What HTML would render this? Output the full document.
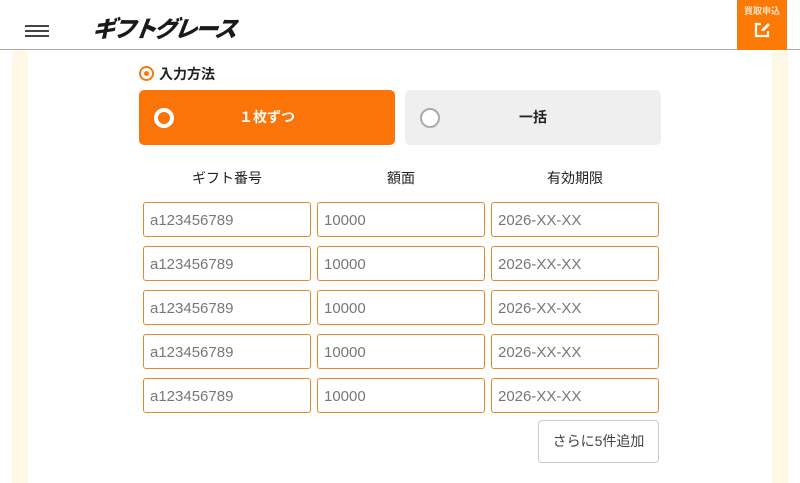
<!DOCTYPE html>
<html><head><meta charset="utf-8"><style>
*{box-sizing:border-box;margin:0;padding:0}
body{width:800px;height:483px;overflow:hidden;background:#fff;font-family:"Liberation Sans","Noto Sans CJK JP",sans-serif;position:relative}
.hdr{position:absolute;left:0;top:0;width:800px;height:50px;border-bottom:1px solid #a8a8a8;background:#fff}
.ham{position:absolute;left:25px;width:24px;height:2px;background:#444}
.logo{position:absolute;left:93px;top:10px;font-size:23px;font-weight:900;font-style:italic;color:#1a1a1a;letter-spacing:-2.5px;transform:skewX(-8deg)}
.buy{position:absolute;left:737px;top:0;width:50px;height:50px;background:#fb7a05;color:#fff;text-align:center}
.buy .t{font-size:9px;margin-top:4px;font-weight:bold;color:#fde4c8}
.strip{position:absolute;top:51px;height:432px;width:16px;background:#fdf9e6}
.a{position:absolute}
.radio{left:139px;top:66px;width:15px;height:15px;border:2px solid #f47a10;border-radius:50%}
.radio:after{content:"";position:absolute;left:3px;top:3px;width:5px;height:5px;border-radius:50%;background:#f47a10}
.lbl{left:159px;top:64px;font-size:14px;font-weight:bold;color:#222}
.btn{top:90px;height:55px;width:256px;border-radius:5px;font-weight:bold;font-size:14px;text-align:center;line-height:55px}
.rc{position:absolute;left:15px;top:18px;width:20px;height:20px;border-radius:50%}
.th{top:168px;font-size:14px;color:#222;text-align:center;width:168px}
.inp{width:168px;height:35px;border:1px solid #e08a2c;border-radius:3px;font-size:15px;color:#777;padding-left:6px;line-height:35px}
.more{left:538px;top:420px;width:121px;height:43px;border:1px solid #ccc;border-radius:4px;font-size:14px;color:#444;text-align:center;line-height:41px}
</style></head><body>
<div class="hdr">
<div class="ham" style="top:25px"></div><div class="ham" style="top:30px"></div><div class="ham" style="top:35px"></div>
<div class="logo">ギフトグレース</div>
<div class="buy"><div class="t">買取申込</div>
<svg width="18" height="18" viewBox="0 0 18 18" style="margin-top:4px"><path d="M8 3H3v12h12v-5" fill="none" stroke="#fff" stroke-width="2.2"/><path d="M8 10l1-2 6-6 2 2-6 6z" fill="#fff"/></svg></div>
</div>
<div class="strip" style="left:12px"></div><div class="strip" style="left:772px"></div>
<div class="a radio"></div>
<div class="a lbl">入力方法</div>
<div class="a btn" style="left:139px;background:#fb7408;color:#fff"><div class="rc" style="border:4px solid #fff"></div>１枚ずつ</div>
<div class="a btn" style="left:405px;background:#efefef;color:#222"><div class="rc" style="border:2px solid #aaa;background:#fff"></div>一括</div>
<div class="a th" style="left:143px">ギフト番号</div>
<div class="a th" style="left:317px">額面</div>
<div class="a th" style="left:491px">有効期限</div>
<div class="a" style="left:143px;top:202px">
<div class="inp a" style="left:0;top:0">a123456789</div><div class="inp a" style="left:174px;top:0">10000</div><div class="inp a" style="left:348px;top:0">2026-XX-XX</div>
<div class="inp a" style="left:0;top:44px">a123456789</div><div class="inp a" style="left:174px;top:44px">10000</div><div class="inp a" style="left:348px;top:44px">2026-XX-XX</div>
<div class="inp a" style="left:0;top:88px">a123456789</div><div class="inp a" style="left:174px;top:88px">10000</div><div class="inp a" style="left:348px;top:88px">2026-XX-XX</div>
<div class="inp a" style="left:0;top:132px">a123456789</div><div class="inp a" style="left:174px;top:132px">10000</div><div class="inp a" style="left:348px;top:132px">2026-XX-XX</div>
<div class="inp a" style="left:0;top:176px">a123456789</div><div class="inp a" style="left:174px;top:176px">10000</div><div class="inp a" style="left:348px;top:176px">2026-XX-XX</div>
</div>
<div class="a more">さらに5件追加</div>
</body></html>
